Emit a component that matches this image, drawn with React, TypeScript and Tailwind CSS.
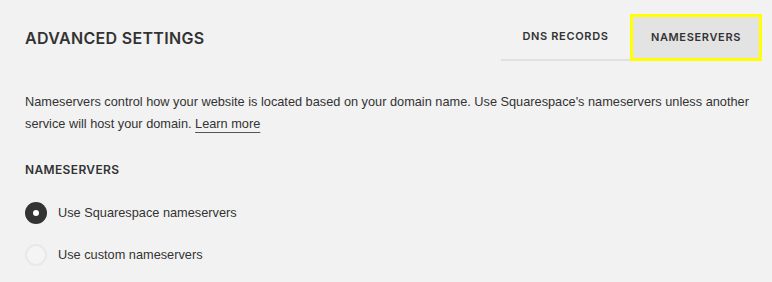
import React from "react";

export default function App() {
  return (
    <div className="w-[772px] h-[282px] bg-[#f2f2f2] overflow-hidden text-[#3e3e3e]" style={{ fontFamily: "Inter, 'Noto Sans', sans-serif" }}>
      <div className="flex items-start pl-[25px] pr-[10px] pt-[14px]">
        <h1 className="flex-1 pt-[14px] text-[16px] leading-[20px] font-semibold tracking-[0.02em] text-[#333]">ADVANCED SETTINGS</h1>
        <div className="flex">
          <div className="w-[129px] h-[47px] flex items-center justify-center border-b-2 border-[#e0e0e0] text-[11px] font-semibold tracking-[0.06em] text-[#333]">
            DNS RECORDS
          </div>
          <div className="w-[132px] h-[47px] flex items-center justify-center bg-[#e3e3e3] border-[3px] border-[#ffff00] text-[11px] font-semibold tracking-[0.06em] text-[#333]">
            NAMESERVERS
          </div>
        </div>
      </div>
      <div className="pl-[25px] pr-[20px] pt-[30px]" style={{ fontFamily: "'Liberation Sans', Arial, sans-serif" }}>
        <p className="text-[12.75px] leading-[22px] text-[#333]">
          Nameservers control how your website is located based on your domain name. Use Squarespace's nameservers unless another service will host your domain.{" "}
          <span className="underline underline-offset-[4px] decoration-[#555]">Learn more</span>
        </p>
        <h2 className="mt-[26px] text-[12px] font-semibold tracking-[0.03em] text-[#333]" style={{ fontFamily: "Inter, sans-serif" }}>NAMESERVERS</h2>
        <div className="mt-[23px] flex flex-col gap-[20px]">
          <div className="flex items-center gap-[11px]">
            <span className="w-[22px] h-[22px] rounded-full bg-[#333] flex items-center justify-center">
              <span className="w-[6px] h-[6px] rounded-full bg-white" />
            </span>
            <span className="text-[12.75px] text-[#333]">Use Squarespace nameservers</span>
          </div>
          <div className="flex items-center gap-[11px]">
            <span className="w-[22px] h-[22px] rounded-full border-2 border-[#e8e8e8] bg-[#f4f4f4]" />
            <span className="text-[12.75px] text-[#333]">Use custom nameservers</span>
          </div>
        </div>
      </div>
    </div>
  );
}
